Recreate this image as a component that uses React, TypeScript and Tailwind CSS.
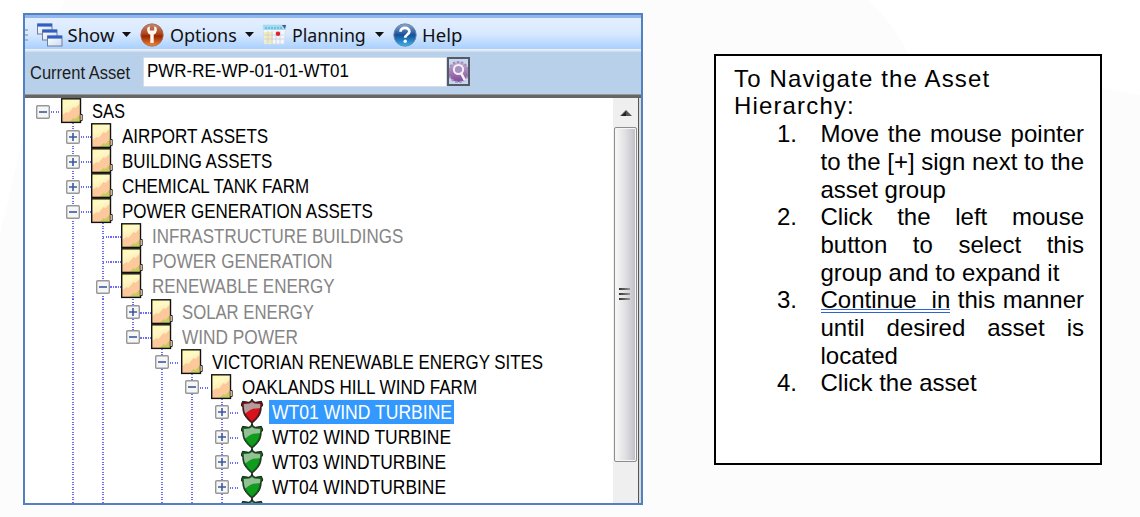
import clsx from "clsx";
import { useLayoutEffect, useRef, useState } from "react";

interface FitTextProps {
  children: string;
  width: number;
  className?: string;
}

// Condenses a label so that it takes exactly the given width
const FitText = ({ children, width, className }: FitTextProps) => {
  const ref = useRef<HTMLSpanElement>(null);
  const [scale, setScale] = useState(1);

  useLayoutEffect(() => {
    if (ref.current) setScale(width / ref.current.offsetWidth);
  }, [width]);

  return (
    <span className="block shrink-0" style={{ width }}>
      <span
        ref={ref}
        className={clsx("inline-block origin-left whitespace-pre", className)}
        style={{ transform: `scaleX(${scale})` }}
      >
        {children}
      </span>
    </span>
  );
};

const WindowsIcon = () => (
  <svg width="26" height="24" viewBox="0 0 26 24">
    <defs>
      <linearGradient id="win" x1="0" y1="0" x2="1" y2="1">
        <stop offset="0" stopColor="#fff" />
        <stop offset="1" stopColor="#cfdbee" />
      </linearGradient>
    </defs>
    {[
      [0.5, 1],
      [5.5, 7],
      [10.5, 13],
    ].map(([x, y]) => (
      <g key={x}>
        <rect x={x} y={y} width="14.500" height="10" fill="url(#win)" stroke="#6d7f9d" />
        <rect x={x} y={y - 0.4} width="14.500" height="3" fill="#2f5fc4" />
      </g>
    ))}
  </svg>
);

const OptionsIcon = () => (
  <svg width="24" height="24" viewBox="0 0 24 24">
    <defs>
      <linearGradient id="opt" x1="0" y1="0" x2="0" y2="1">
        <stop offset="0" stopColor="#c08a78" />
        <stop offset="0.45" stopColor="#b0441c" />
        <stop offset="0.55" stopColor="#982400" />
        <stop offset="1" stopColor="#f58a35" />
      </linearGradient>
    </defs>
    <circle cx="12" cy="12" r="11.2" fill="url(#opt)" stroke="#a5674f" strokeWidth="0.8" />
    <path
      d="M7.500 4.500C6.600 8 7.800 10.800 10.300 11.600V20h3.400v-8.400c2.500-.8 3.700-3.600 2.800-7.100l-2.300-1.300v4.300h-4.400V3.200z"
      fill="#fff6ee"
    />
  </svg>
);

const PlanningIcon = () => (
  <svg width="25" height="21" viewBox="0 0 25 21">
    <path d="M1 1h23l-2 19H2z" fill="#f4f7fc" stroke="#cdd8e8" strokeWidth="0.7" />
    <path d="M1 1h23l-.6 5H1.500z" fill="#9fdcf2" />
    <path d="M3 4h17" stroke="#4aa0cf" strokeWidth="1.200" strokeDasharray="2 1" />
    <path d="M2 8h9v11H3z" fill="#f5edb0" />
    <path d="M2 11h20M2 15h20M6 7v13M10 7v13M14 7v13M18 7v13" stroke="#c9cde6" strokeWidth="0.8" />
    <path d="M20 1h4l-1 4z" fill="#48588c" />
    <circle cx="16" cy="9.800" r="2.200" fill="#e01f2a" />
  </svg>
);

const HelpIcon = () => (
  <svg width="24" height="24" viewBox="0 0 24 24">
    <defs>
      <linearGradient id="help" x1="0" y1="0" x2="0" y2="1">
        <stop offset="0" stopColor="#8fa9cc" />
        <stop offset="0.5" stopColor="#17509a" />
        <stop offset="1" stopColor="#35b5ee" />
      </linearGradient>
    </defs>
    <circle cx="12" cy="12" r="11.2" fill="url(#help)" stroke="#6d87a8" strokeWidth="0.9" />
    <path
      d="M7.500 8.800c0-5.200 8.900-5 8.900-.3 0 3-4.200 3-4.200 6.300"
      fill="none"
      stroke="#fff"
      strokeWidth="2.700"
    />
    <circle cx="12.200" cy="18.300" r="1.700" fill="#fff" />
  </svg>
);

const SearchGearIcon = () => (
  <svg width="19" height="25" viewBox="0 0 19 25">
    <defs>
      <linearGradient id="gear" x1="0" y1="0" x2="0" y2="1">
        <stop offset="0" stopColor="#c3b3d3" />
        <stop offset="1" stopColor="#7d4796" />
      </linearGradient>
    </defs>
    <rect width="19" height="25" fill="#c5d8ee" />
    <circle cx="9.500" cy="13" r="10" fill="url(#gear)" stroke="#a58dbb" strokeWidth="2" strokeDasharray="2.500 1.600" />
    <circle cx="9.500" cy="10.500" r="4.600" fill="#a690bd" stroke="#f5eefa" strokeWidth="2" />
    <path d="M12.300 14.500l3.200 6" stroke="#f5eefa" strokeWidth="2.600" strokeLinecap="round" />
  </svg>
);

const Caret = () => (
  <svg width="9" height="5" viewBox="0 0 9 5">
    <path d="M0 0h9L4.500 5z" fill="#111" />
  </svg>
);

const FolderIcon = () => (
  <svg width="24" height="26" viewBox="0 0 24 26" className="block">
    <defs>
      <linearGradient id="folder" x1="0" y1="0" x2="0.300" y2="1">
        <stop offset="0" stopColor="#fffb9c" />
        <stop offset="0.300" stopColor="#fff9c8" />
        <stop offset="1" stopColor="#fbe09a" />
      </linearGradient>
    </defs>
    <rect x="0.700" y="0.800" width="18.800" height="23.600" fill="url(#folder)" />
    <path d="M1.500 17l4-3 2 1 5-6 2 1 4-4v18h-17z" fill="#fcc89c" />
    <path d="M8.500 24l4-4 2 1 4.500-5v8z" fill="#c8ca62" />
    <rect x="0.700" y="0.800" width="18.800" height="23.600" fill="none" stroke="#111" strokeWidth="1.400" />
    <path d="M19.500 16.500h1.700v6h-1.700" fill="#fff" stroke="#222" strokeWidth="1" />
    <path d="M19.300 18v3" stroke="#e0562c" strokeWidth="1" />
  </svg>
);

const ShieldIcon = ({ color }: { color: "red" | "green" }) => (
  <svg width="24" height="26" viewBox="0 0 24 26" className="block">
    <path
      d="M11 .8L8 3.300 1.500 2.300.2 6l1.600 2.500c0 3.500.9 7 3.200 9.800 1.600 2.200 3.600 4.200 6 5.900 2.400-1.700 4.400-3.700 6-5.900 2.300-2.800 3.200-6.300 3.200-9.800L21.800 6l-1.300-3.700L14 3.300z"
      fill={color === "red" ? "#6e1216" : "#125f1c"}
      stroke="#151515"
      strokeWidth="0.900"
    />
    <path
      d="M3.300 5.500L8.500 5 11 3.500 13.500 5l5.200.5c.3 5.500-1 9.500-3.300 12.300-1.300 1.700-2.800 3.200-4.400 4.400-1.600-1.200-3.100-2.700-4.400-4.400C4.300 15 3 11 3.300 5.500z"
      fill={color === "red" ? "#d6121c" : "#109c1c"}
    />
    <path
      d="M2.800 5l5.700-.4L11 3l2.500 1.600 5.700.4c.1 1.500 0 3-.3 4.200-4.900-.4-9.900 1-14.600 5.300C3.200 12 2.700 9 2.800 5z"
      fill={color === "red" ? "#b59c9c" : "#93c195"}
    />
    <path d="M11 23.500V26M11 0v1.500" stroke="#222" strokeWidth="1.600" />
  </svg>
);

const Expander = ({ open }: { open: boolean }) => (
  <svg width="14" height="14" viewBox="0 0 14 14" className="absolute left-[8px] top-[6.500px]">
    <rect x="0.700" y="0.700" width="12.600" height="12.600" rx="1" fill="#f6f6f6" stroke="#979797" strokeWidth="1.400" />
    <path d={open ? "M3 7h8" : "M3 7h8M7 3v8"} stroke="#3a5a9e" strokeWidth="1.600" />
  </svg>
);

interface Node {
  label: string;
  width: number;
  level: number;
  icon: "folder" | "red" | "green";
  state: "open" | "closed" | "leaf";
  guides: number[];
  muted?: boolean;
  selected?: boolean;
  last?: boolean;
}

const nodes: Node[] = [
  { label: "SAS", width: 33, level: 0, icon: "folder", state: "open", guides: [] },
  { label: "AIRPORT ASSETS", width: 146, level: 1, icon: "folder", state: "closed", guides: [1] },
  { label: "BUILDING ASSETS", width: 150, level: 1, icon: "folder", state: "closed", guides: [1] },
  { label: "CHEMICAL TANK FARM", width: 187, level: 1, icon: "folder", state: "closed", guides: [1] },
  { label: "POWER GENERATION ASSETS", width: 251, level: 1, icon: "folder", state: "open", guides: [1] },
  { label: "INFRASTRUCTURE BUILDINGS", width: 251, level: 2, icon: "folder", state: "leaf", guides: [1, 2], muted: true },
  { label: "POWER GENERATION", width: 181, level: 2, icon: "folder", state: "leaf", guides: [1, 2], muted: true },
  { label: "RENEWABLE ENERGY", width: 183, level: 2, icon: "folder", state: "open", guides: [1, 2], muted: true },
  { label: "SOLAR ENERGY", width: 132, level: 3, icon: "folder", state: "closed", guides: [1, 2, 3], muted: true },
  { label: "WIND POWER", width: 116, level: 3, icon: "folder", state: "open", guides: [1, 2, 3], muted: true, last: true },
  { label: "VICTORIAN RENEWABLE ENERGY SITES", width: 331, level: 4, icon: "folder", state: "open", guides: [1, 2, 4] },
  { label: "OAKLANDS HILL WIND FARM", width: 235, level: 5, icon: "folder", state: "open", guides: [1, 2, 4, 5] },
  { label: "WT01 WIND TURBINE", width: 180, level: 6, icon: "red", state: "closed", guides: [1, 2, 4, 5, 6], selected: true },
  { label: "WT02 WIND TURBINE", width: 179, level: 6, icon: "green", state: "closed", guides: [1, 2, 4, 5, 6] },
  { label: "WT03 WINDTURBINE", width: 174, level: 6, icon: "green", state: "closed", guides: [1, 2, 4, 5, 6] },
  { label: "WT04 WINDTURBINE", width: 174, level: 6, icon: "green", state: "closed", guides: [1, 2, 4, 5, 6] },
  { label: "", width: 0, level: 6, icon: "green", state: "leaf", guides: [1, 2, 4, 5, 6] },
];

const TreeRow = ({ node }: { node: Node }) => (
  <div className="flex h-[25.07px] shrink-0">
    {Array.from({ length: node.level + 1 }, (_, k) => (
      <div key={k} className="relative w-[29.85px] shrink-0">
        {node.guides.includes(k) && (
          <div
            className={clsx(
              "absolute left-[14px] top-0 w-[2px] bg-[repeating-linear-gradient(to_bottom,#6a6aff_0_1.4px,#fff_1.4px_2.507px)]",
              node.last && k === node.level ? "h-[13px]" : "h-full",
            )}
          />
        )}
        {k === node.level && (
          <>
            <div className="absolute left-[15px] top-[13px] h-[2px] w-[18px] bg-[repeating-linear-gradient(to_right,#6a6aff_0_1.4px,#fff_1.4px_2.5px)]" />
            {node.state !== "leaf" && <Expander open={node.state === "open"} />}
          </>
        )}
      </div>
    ))}
    <div className="relative ml-[3.6px] w-7 shrink-0">
      {node.icon === "folder" ? <FolderIcon /> : <ShieldIcon color={node.icon} />}
    </div>
    {node.label && (
      <div
        className={clsx(
          "h-[24px] pl-[3px] pr-[2.500px] mt-px text-[19.5px] leading-[24px]",
          node.selected && "bg-[#3399ff] text-white",
          node.muted && "text-[#858585]",
        )}
      >
        <FitText width={node.width}>{node.label}</FitText>
      </div>
    )}
  </div>
);

const ScrollBar = () => (
  <div className="flex w-[25px] shrink-0 flex-col items-center bg-[#efefef]">
    <svg width="12" height="6" viewBox="0 0 12 6" className="mt-[12px] shrink-0">
      <path d="M0 6l6-6 6 6z" fill="#555" />
      <path d="M1.500 6l4.500-4.500V6z" fill="#222" />
    </svg>
    <div className="mt-[11px] flex h-[335px] w-[23px] shrink-0 flex-col items-center rounded-[2px] border border-[#8e8e8e] bg-linear-to-r from-[#f8f8f8] via-[#e0e0e3] to-[#bdbdc6] pt-[160px] pr-[3px] shadow-[inset_0_0_0_1px_#f5f5f5]">
      <div className="flex flex-col gap-[3px]">
        <div className="h-[2px] w-[11px] bg-linear-to-r from-[#333] to-[#999]" />
        <div className="h-[2px] w-[11px] bg-linear-to-r from-[#333] to-[#999]" />
        <div className="h-[2px] w-[11px] bg-linear-to-r from-[#333] to-[#999]" />
      </div>
    </div>
  </div>
);

const Toolbar = () => (
  <div className="flex h-[34px] shrink-0 items-center border-t-[3px] border-[#91b7ec] bg-linear-to-b from-[#e3efff] via-[#d8e9ff] to-[#a9d0ff] pt-[2px] font-['Noto_Sans'] text-[18.5px] leading-[29px] text-[#111]">
    <div className="flex w-[3px] flex-col gap-[3px]">
      <i className="h-[2px] w-[3px] bg-[#a9b4c4]" />
      <i className="h-[2px] w-[3px] bg-[#a9b4c4]" />
      <i className="h-[2px] w-[3px] bg-[#a9b4c4]" />
    </div>
    <div className="ml-[9px] flex w-[103px] items-center">
      <WindowsIcon />
      <div className="ml-[4.500px]"><FitText width={47}>Show</FitText></div>
      <div className="ml-[7px]"><Caret /></div>
    </div>
    <div className="flex w-[122px] items-center">
      <OptionsIcon />
      <div className="ml-[5.500px]"><FitText width={67}>Options</FitText></div>
      <div className="ml-[8px]"><Caret /></div>
    </div>
    <div className="flex w-[131px] items-center">
      <PlanningIcon />
      <div className="ml-[5px]"><FitText width={74}>Planning</FitText></div>
      <div className="ml-[9px]"><Caret /></div>
    </div>
    <HelpIcon />
    <div className="ml-[5px]"><FitText width={40}>Help</FitText></div>
  </div>
);

const AssetWindow = () => (
  <div className="ml-[23px] mt-[13px] flex h-[492px] w-[620px] shrink-0 flex-col overflow-hidden border-2 border-[#5182bf] bg-white text-black">
    <Toolbar />
    <div className="h-[3px] shrink-0 bg-linear-to-b from-[#f4f6f8] to-[#c9d9ec]" />
    <div className="flex h-[42px] shrink-0 bg-[#b9d0ea] pl-[5px] pt-[5px]">
      <div className="mt-[4px] w-[113px] text-[18px] leading-[24px] text-[#1c1c1c]">
        <FitText width={100}>Current Asset</FitText>
      </div>
      <div className="h-[30px] w-[304px] border border-[#d5dde8] bg-white pl-[3px] text-[19px] leading-[26px]">
        <FitText width={202}>PWR-RE-WP-01-01-WT01</FitText>
      </div>
      <div className="h-[29px] w-[23px] border-2 border-[#565a66] bg-[#c5d8ee]">
        <SearchGearIcon />
      </div>
    </div>
    <div className="h-[4px] shrink-0 border-t border-[#999] bg-[#656565]" />
    <div className="flex min-h-0 flex-1 overflow-hidden">
      <div className="flex min-w-0 flex-1 flex-col pl-[3px]">
        {nodes.map((node, i) => (
          <TreeRow key={i} node={node} />
        ))}
      </div>
      <ScrollBar />
      <div className="w-[3px] border-l border-[#555] bg-[#dadada]" />
    </div>
  </div>
);

const steps = [
  ["Move the mouse pointer", "to the [+] sign next to the", "asset group"],
  ["Click the left mouse", "button to select this", "group and to expand it"],
  ["Continue in this manner", "until desired asset is", "located"],
  ["Click the asset"],
];

const Instructions = () => (
  <div className="ml-[71px] mt-[54px] h-[411px] w-[388px] shrink-0 border-2 border-black bg-white pl-[18px] pt-[9px] text-[24px] leading-[27.66px] text-black">
    <p className="tracking-[1.15px] leading-[27.4px]">
      To Navigate the Asset
      <br />
      Hierarchy:
    </p>
    <ol className="pt-[0.5px]">
      {steps.map((lines, i) => (
        <li key={i} className="flex">
          <span className="w-[86.5px] pl-[43px]">{i + 1}.</span>
          <div className="w-[263.5px]">
            {lines.map((line, j) => (
              <p
                key={line}
                className={clsx(
                  "whitespace-nowrap",
                  j < lines.length - 1 && "text-justify [text-align-last:justify]",
                )}
              >
                {line.startsWith("Continue") ? (
                  <>
                    <span className="relative">
                      Continue&nbsp; in
                      <i className="absolute bottom-0 left-0 h-[4px] w-full border-y border-[#2f63d0]" />
                    </span>{" "}
                    this manner
                  </>
                ) : (
                  line
                )}
              </p>
            ))}
          </div>
        </li>
      ))}
    </ol>
  </div>
);

const App = () => (
  <div className="relative flex h-[517px] w-[1140px] overflow-hidden bg-[#fcfcfc] font-['Liberation_Sans',sans-serif]">
    {/* faint curved backdrop */}
    <svg width="1140" height="517" className="absolute inset-0">
      <path d="M0 0H65Q45 40 36 80T0 235z" fill="#fff" />
      <path d="M868 0H1140V95Q1060 78 910 60Q900 30 868 0z" fill="#fff" />
    </svg>
    <div className="relative flex">
      <AssetWindow />
      <Instructions />
    </div>
  </div>
);

export default App;
